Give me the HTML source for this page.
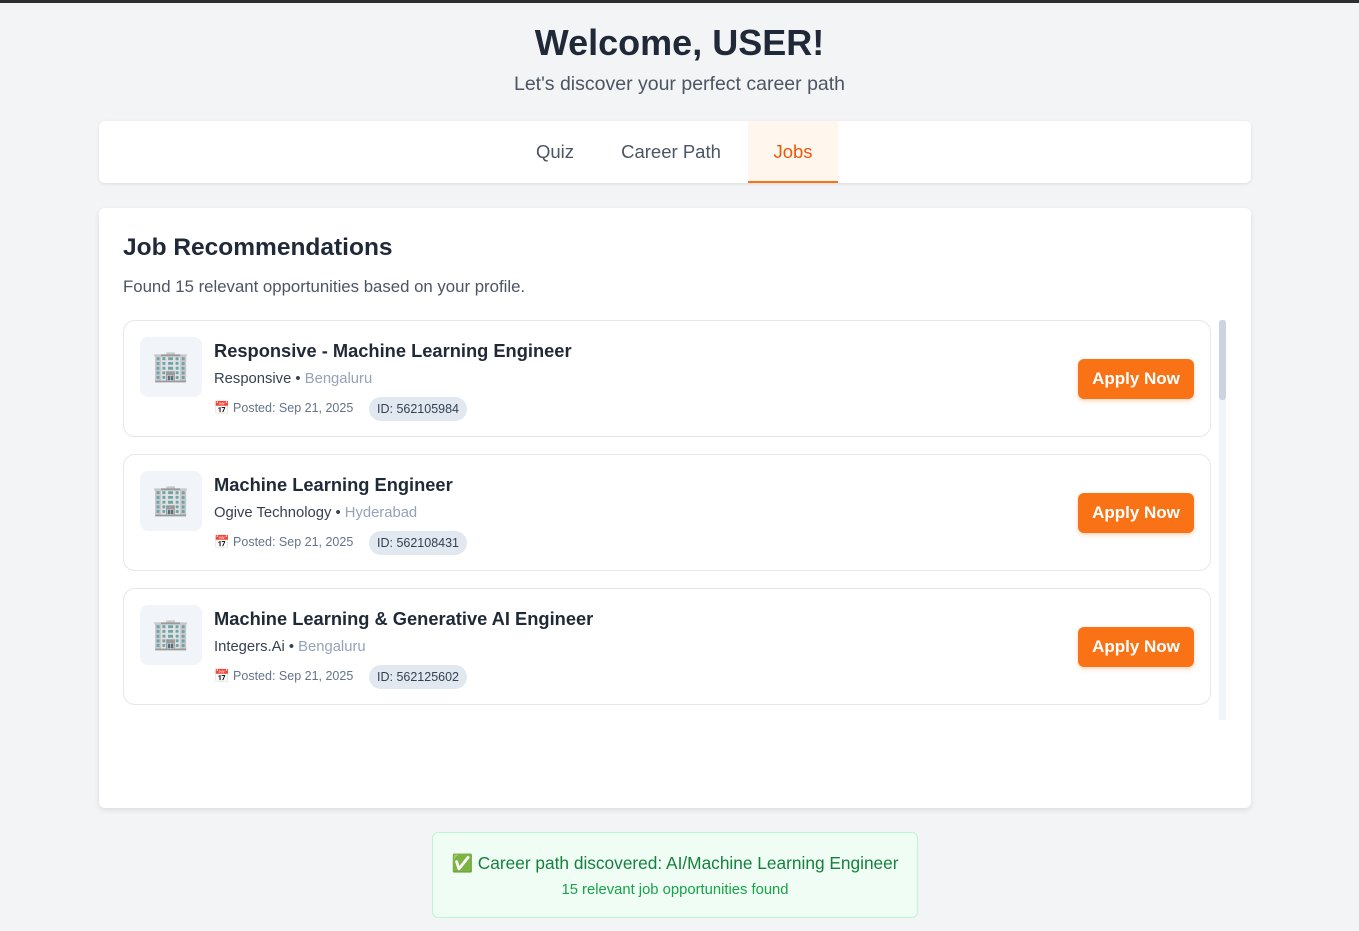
<!DOCTYPE html>
<html><head><meta charset="utf-8"><style>
*{box-sizing:border-box;margin:0;padding:0}
body{width:1359px;height:931px;background:#f3f4f6;font-family:"Liberation Sans",sans-serif;color:#1f2937;border-top:3px solid #2d2d2d;position:relative;overflow:hidden}
h1{position:absolute;top:19px;width:100%;text-align:center;font-size:36px;font-weight:bold;color:#1f2937}
.sub{position:absolute;top:70px;width:100%;text-align:center;font-size:19.5px;color:#4b5563}
.tabs{position:absolute;left:99px;top:118px;width:1152px;height:62px;background:#fff;border-radius:6px;box-shadow:0 1px 3px rgba(0,0,0,.1)}
.tab{position:absolute;top:0;height:62px;line-height:62px;font-size:18.5px;color:#4b5563;text-align:center}
.tab.on{background:#fff7ed;color:#ea580c;border-bottom:2px solid #f97316}
.card{position:absolute;left:99px;top:205px;width:1152px;height:600px;background:#fff;border-radius:6px;box-shadow:0 2px 6px rgba(0,0,0,.1)}
.card h2{position:absolute;left:24px;top:26px;font-size:24.5px;font-weight:bold}
.card .d{position:absolute;left:24px;top:69px;font-size:16.8px;color:#4b5563}
.list{position:absolute;left:24px;top:112px;width:1088px;height:400px;overflow:hidden}
.job{position:absolute;left:0;width:1088px;height:117px;border:1px solid #e5e7eb;border-radius:12px;background:#fff}
.ico{position:absolute;left:16px;top:16px;width:62px;height:60px;background:#f1f5f9;border-radius:8px;text-align:center;line-height:60px;font-size:30px;font-family:"DejaVu Sans",sans-serif;color:#7fa9a9}
.t{position:absolute;left:90px;top:19px;font-size:18.3px;font-weight:bold;color:#1f2937}
.c{position:absolute;left:90px;top:50px;font-size:14.8px;color:#374151}
.c span{color:#94a3b8}
.m{position:absolute;left:90px;top:80px;font-size:12.5px;color:#64748b}
.id{position:absolute;left:245px;top:76px;height:24px;line-height:24px;padding:0 8px;background:#e2e8f0;border-radius:12px;font-size:12.5px;color:#334155}
.btn{position:absolute;right:16px;top:38px;width:116px;height:40px;background:#f97316;color:#fff;border-radius:6px;font-size:17px;font-weight:bold;text-align:center;line-height:40px;box-shadow:0 2px 4px rgba(249,115,22,.3)}
.sb{position:absolute;left:1120px;top:112px;width:7px;height:400px;background:#f1f5f9}
.sb i{display:block;width:7px;height:80px;background:#cbd5e1;border-radius:3px}
.ok{position:absolute;left:432px;top:829px;width:486px;height:86px;background:#f0fdf4;border:1px solid #bbf7d0;border-radius:6px;text-align:center}
.ok .a{margin-top:20px;font-size:17.3px;color:#15803d}
.ok .b{margin-top:8px;font-size:14.8px;color:#16a34a}
</style></head><body>
<h1>Welcome, USER!</h1>
<div class="sub">Let's discover your perfect career path</div>
<div class="tabs">
<div class="tab" style="left:418px;width:76px">Quiz</div>
<div class="tab" style="left:502px;width:140px">Career Path</div>
<div class="tab on" style="left:649px;width:90px">Jobs</div>
</div>
<div class="card">
<h2>Job Recommendations</h2>
<div class="d">Found 15 relevant opportunities based on your profile.</div>
<div class="list">
<div class="job" style="top:0"><div class="ico">🏢</div><div class="t">Responsive - Machine Learning Engineer</div><div class="c">Responsive • <span>Bengaluru</span></div><div class="m">📅 Posted: Sep 21, 2025</div><div class="id">ID: 562105984</div><div class="btn">Apply Now</div></div>
<div class="job" style="top:134px"><div class="ico">🏢</div><div class="t">Machine Learning Engineer</div><div class="c">Ogive Technology • <span>Hyderabad</span></div><div class="m">📅 Posted: Sep 21, 2025</div><div class="id">ID: 562108431</div><div class="btn">Apply Now</div></div>
<div class="job" style="top:268px"><div class="ico">🏢</div><div class="t">Machine Learning &amp; Generative AI Engineer</div><div class="c">Integers.Ai • <span>Bengaluru</span></div><div class="m">📅 Posted: Sep 21, 2025</div><div class="id">ID: 562125602</div><div class="btn">Apply Now</div></div>
<div class="job" style="top:402px"></div>
</div>
<div class="sb"><i></i></div>
</div>
<div class="ok"><div class="a"><span style="font-family:'DejaVu Sans',sans-serif;color:#22c55e">✅</span> Career path discovered: AI/Machine Learning Engineer</div><div class="b">15 relevant job opportunities found</div></div>
</body></html>
